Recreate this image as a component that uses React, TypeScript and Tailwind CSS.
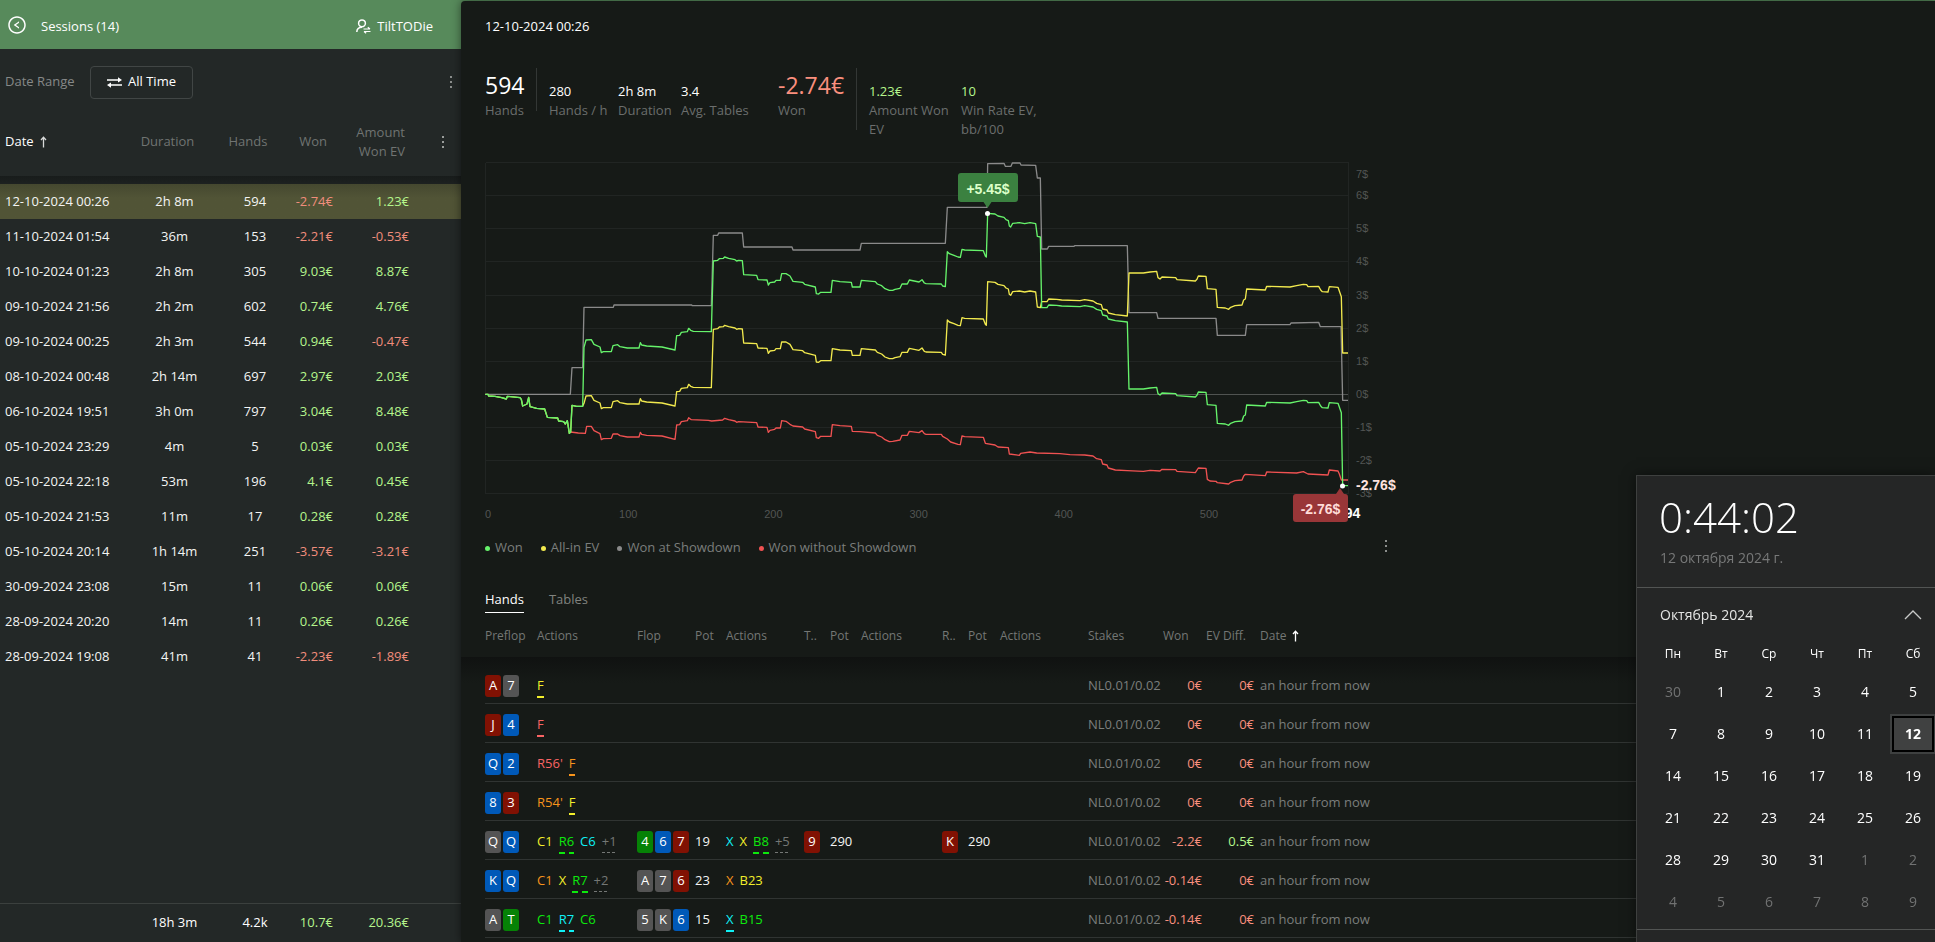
import { useState } from "react";
import type { ReactNode } from "react";
import { AiOutlineLeftCircle } from "react-icons/ai";

interface Session {
  date: string;
  duration: string;
  hands: string;
  won: string;
  ev: string;
}

const SESSIONS: Session[] = [
  { date: "12-10-2024 00:26", duration: "2h 8m", hands: "594", won: "-2.74€", ev: "1.23€" },
  { date: "11-10-2024 01:54", duration: "36m", hands: "153", won: "-2.21€", ev: "-0.53€" },
  { date: "10-10-2024 01:23", duration: "2h 8m", hands: "305", won: "9.03€", ev: "8.87€" },
  { date: "09-10-2024 21:56", duration: "2h 2m", hands: "602", won: "0.74€", ev: "4.76€" },
  { date: "09-10-2024 00:25", duration: "2h 3m", hands: "544", won: "0.94€", ev: "-0.47€" },
  { date: "08-10-2024 00:48", duration: "2h 14m", hands: "697", won: "2.97€", ev: "2.03€" },
  { date: "06-10-2024 19:51", duration: "3h 0m", hands: "797", won: "3.04€", ev: "8.48€" },
  { date: "05-10-2024 23:29", duration: "4m", hands: "5", won: "0.03€", ev: "0.03€" },
  { date: "05-10-2024 22:18", duration: "53m", hands: "196", won: "4.1€", ev: "0.45€" },
  { date: "05-10-2024 21:53", duration: "11m", hands: "17", won: "0.28€", ev: "0.28€" },
  { date: "05-10-2024 20:14", duration: "1h 14m", hands: "251", won: "-3.57€", ev: "-3.21€" },
  { date: "30-09-2024 23:08", duration: "15m", hands: "11", won: "0.06€", ev: "0.06€" },
  { date: "28-09-2024 20:20", duration: "14m", hands: "11", won: "0.26€", ev: "0.26€" },
  { date: "28-09-2024 19:08", duration: "41m", hands: "41", won: "-2.23€", ev: "-1.89€" },
];

const moneyColor = (v: string) => (v.startsWith("-") ? "text-[#f08d7c]" : "text-[#b5f58c]");

function ArrowUp({ className = "" }: { className?: string }) {
  return (
    <svg className={className} width="7" height="12" viewBox="0 0 7 12" fill="none" stroke="currentColor" strokeWidth="1.300">
      <path d="M3.500 11.500V1.500M1 4L3.500 1.300L6 4" />
    </svg>
  );
}

function MoreIcon() {
  return (
    <svg width="2" height="12" viewBox="0 0 2 12" fill="currentColor">
      <path d="M0 0h2v2H0zM0 5h2v2H0zM0 10h2v2H0z" />
    </svg>
  );
}

function SwapIcon() {
  return (
    <svg width="15" height="11" viewBox="0 0 15 11" fill="currentColor">
      <path d="M0 2.300h11V0.300L15 3l-4 2.600V3.700H0zM15 7.300H4V5.400L0 8l4 2.700V8.700h11z" />
    </svg>
  );
}

function UserSwitchIcon() {
  return (
    <svg width="15" height="15" viewBox="0 0 15 15" fill="none" stroke="currentColor" strokeWidth="1.500">
      <circle cx="6" cy="4.300" r="3.400" />
      <path d="M0.800 13C0.900 10 3 8.200 6 8.200" />
      <path d="M7.500 10h6.500M11.800 8.200L14 10M14.500 12.500H8M10.200 14.300L8 12.500" strokeWidth="1.200" />
    </svg>
  );
}

function SessionCols() {
  return (
    <colgroup>
      <col className="w-[132px]" />
      <col className="w-[85px]" />
      <col className="w-[76px]" />
      <col className="w-10" />
      <col className="w-[76px]" />
      <col />
    </colgroup>
  );
}

function Sidebar() {
  const [selected, setSelected] = useState(0);

  return (
    <aside className="flex w-[461px] shrink-0 flex-col bg-[#232827]">
      <header className="flex h-[49px] shrink-0 items-center bg-[#578a5b] pr-7 pl-[7px] text-[13px] font-medium text-white">
        <button aria-label="Back">
          <AiOutlineLeftCircle size={20} />
        </button>
        <h1 className="ml-3.5 pt-1">Sessions (14)</h1>
        <button className="ml-auto flex items-center gap-1.5 pt-1">
          <UserSwitchIcon />
          TiltTODie
        </button>
      </header>

      <div className="flex h-[66px] shrink-0 items-center pr-[9px] pl-[5px] text-[13px]">
        <span className="w-[85px] text-[#868988]">Date Range</span>
        <button className="flex h-[33px] w-[103px] items-center justify-center gap-1.5 rounded border border-[#414645] font-medium text-white">
          <SwapIcon />
          All Time
        </button>
        <button aria-label="Filter options" className="ml-auto text-[#8b8e8c]">
          <MoreIcon />
        </button>
      </div>

      <table className="w-full table-fixed border-collapse text-[13px] whitespace-nowrap">
        <SessionCols />
        <thead>
          <tr className="h-[61px] text-[#707472] [&>th]:pb-2 [&>th]:font-normal">
            <th className="pl-[5px] text-left text-white">
              <span className="flex items-center gap-1.5">
                <span className="font-medium">Date</span>
                <ArrowUp className="text-[#d8dad9]" />
              </span>
            </th>
            <th className="pr-3.5">Duration</th>
            <th className="pr-3.5">Hands</th>
            <th className="pr-1.5 text-right">Won</th>
            <th className="pr-1 text-right leading-[19px]">
              Amount
              <br />
              Won EV
            </th>
            <th>
              <button aria-label="Columns" className="ml-[33px] block text-[#9a9d9b]">
                <MoreIcon />
              </button>
            </th>
          </tr>
        </thead>
        <tbody className="text-center font-medium text-[#f4f5f4] [&_td]:pt-px">
          <tr aria-hidden="true">
            <td colSpan={6} className="h-2 bg-linear-to-b from-[#181c1b] to-[#1d2120]" />
          </tr>
          {SESSIONS.map((s, i) => (
            <tr
              key={s.date}
              onClick={() => setSelected(i)}
              className={`h-[35px] cursor-pointer ${selected === i ? "bg-linear-to-b from-[#45482f] to-[#515436] to-40%" : ""}`}
            >
              <td className="pl-[5px] text-left">{s.date}</td>
              <td>{s.duration}</td>
              <td>{s.hands}</td>
              <td className={`text-right ${moneyColor(s.won)}`}>{s.won}</td>
              <td className={`text-right ${moneyColor(s.ev)}`}>{s.ev}</td>
              <td />
            </tr>
          ))}
        </tbody>
      </table>

      <table className="mt-auto w-full table-fixed border-collapse text-[13px] font-medium whitespace-nowrap">
        <SessionCols />
        <tbody>
          <tr className="h-[39px] border-t border-[#3b403e] text-center text-white">
            <td />
            <td>18h 3m</td>
            <td>4.2k</td>
            <td className="text-right text-[#b5f58c]">10.7€</td>
            <td className="text-right text-[#b5f58c]">20.36€</td>
            <td />
          </tr>
        </tbody>
      </table>
    </aside>
  );
}

function Stat({ value, label, big, className = "" }: { value: string; label: string; big?: boolean; className?: string }) {
  return (
    <div className={`flex flex-col whitespace-pre-line ${big ? "pt-px" : "pt-[13px] font-medium"} ${className}`}>
      <span className={big ? "text-[23px] leading-8" : "text-[13px] leading-5"}>{value}</span>
      <span className="text-[13px] leading-[19px] font-normal text-[#6b6e6d]">{label}</span>
    </div>
  );
}

function Stats() {
  return (
    <section className="mt-8 flex items-start text-white">
      <Stat big value="594" label="Hands" className="w-[51px]" />
      <div className="h-[43px] w-px bg-[#333735]" />
      <Stat value="280" label="Hands / h" className="ml-3 w-[69px]" />
      <Stat value="2h 8m" label="Duration" className="w-[63px]" />
      <Stat value="3.4" label="Avg. Tables" className="w-[97px]" />
      <Stat big value="-2.74€" label="Won" className="w-[78px] text-[#fa8f7e]" />
      <div className="h-[62px] w-px bg-[#333735]" />
      <Stat value="1.23€" label={"Amount Won\nEV"} className="ml-3 w-[92px] text-[#b5f58c]" />
      <Stat value="10" label={"Win Rate EV,\nbb/100"} className="w-[92px] text-[#b5f58c]" />
    </section>
  );
}

type Point = [number, number];

const parse = (s: string): Point[] => s.split(" ").map((p) => p.split(",").map(Number) as Point);
const toPoints = (pts: Point[]) => pts.map((p) => p.join(",")).join(" ");

const SHOWDOWN = parse(
  "46,733 301,733 306,653 338,653 342,472 430,472 432,465 665,465 667,467 724,467 730,256 743,256 746,249 817,249 821,291 966,291 969,300 1170,300 1174,280 1426,280 1432,172 1551,172 1553,41 1602,40 1606,49 1623,49 1627,39 1650,39 1653,45 1697,46 1702,84 1711,84 1715,297 1732,297 1736,289 1812,289 1814,287 1972,287 1977,488 2060,488 2064,505 2238,505 2242,556 2326,556 2330,524 2460,524 2463,519 2546,517 2551,530 2613,530 2618,751 2634,751"
);

const WON = parse(
  "46,733 54,733 56,738 75,739 95,743 109,747 112,739 150,743 154,748 158,768 171,762 176,742 180,770 200,775 224,777 232,802 263,804 266,813 281,815 286,822 292,812 298,850 302,846 306,766 320,769 338,769 " +
    "342,592 348,570 364,569 372,583 390,591 394,608 400,605 424,605 429,587 443,584 450,590 472,594 507,594 511,578 515,585 530,588 576,591 615,600 620,557 629,556 634,547 652,545 656,535 662,541 670,544 724,545 " +
    "730,333 743,331 748,326 760,325 764,321 776,325 795,329 800,333 806,331 817,332 821,374 860,376 864,389 891,390 895,405 900,398 914,396 918,391 931,391 935,371 948,371 960,378 969,394 998,397 1004,403 1036,411 1039,431 1046,432 1052,427 1083,427 1087,391 1110,395 1144,397 1147,411 1170,411 1174,391 1216,395 1222,402 1235,407 1245,416 1258,421 1268,421 1275,418 1290,415 1296,402 1312,402 1318,390 1347,396 1356,389 1363,399 1368,401 1414,402 1418,408 1426,410 " +
    "1432,305 1438,311 1452,316 1464,321 1471,322 1476,298 1484,300 1540,302 1546,318 1549,321 1553,190 1575,192 1584,198 1602,202 1608,209 1615,212 1618,228 1622,231 1628,220 1648,218 1664,221 1680,218 1697,221 1702,259 1711,261 " +
    "1715,473 1731,473 1736,465 1760,466 1775,468 1830,470 1844,467 1869,471 1880,478 1894,482 1898,495 1911,498 1915,507 1936,512 1972,516 " +
    "1977,717 2020,717 2040,714 2060,712 2064,731 2070,735 2076,729 2117,731 2121,737 2176,741 2181,736 2185,726 2208,727 2212,764 2238,766 2242,820 2266,822 2276,826 2282,820 2295,815 2316,813 2321,798 2326,795 2330,765 2386,768 2390,757 2460,759 2480,755 2500,751 2510,752 2514,758 2546,757 2552,768 2557,773 2574,774 2578,758 2604,760 2614,788 2618,1007 2634,1007"
);

const NO_SHOWDOWN = parse(
  "302,846 325,849 346,850 350,829 364,829 372,842 390,851 394,869 400,866 424,865 429,852 443,852 450,857 472,861 507,861 511,847 515,853 530,856 576,858 615,868 620,825 629,824 634,815 652,812 656,803 664,809 715,811 725,813 758,810 764,805 776,809 795,813 800,817 806,815 860,818 864,831 891,832 895,847 900,841 914,838 918,834 931,834 935,812 948,814 960,823 969,828 998,831 1004,837 1036,845 1039,863 1046,865 1052,859 1083,859 1087,824 1110,827 1144,829 1147,844 1170,845 1216,849 1222,856 1235,861 1245,869 1258,875 1268,874 1290,870 1296,856 1312,856 1318,844 1347,848 1356,842 1363,851 1368,853 1414,853 1418,859 1432,867 1442,876 1464,883 1471,884 1476,858 1484,860 1540,862 1546,880 1575,885 1584,891 1615,893 1618,912 1648,916 1652,910 1680,906 1700,909 1770,911 1800,914 1844,915 1869,918 1880,926 1894,929 1898,942 1911,945 1915,954 1936,960 1972,962 2020,964 2040,961 2070,963 2076,958 2117,959 2121,964 2176,968 2185,954 2208,955 2212,988 2220,993 2238,994 2242,998 2276,1002 2282,997 2295,992 2316,990 2321,978 2326,973 2386,977 2390,966 2480,969 2500,965 2514,972 2574,975 2578,960 2604,963 2608,972 2614,990 2634,990"
);

// all-in luck per stretch: [last x, difference from the won line]
const EV_DIFF: Point[] = [
  [340, 0],
  [726, 168],
  [1700, 205],
  [1712, 212],
  [1974, -18],
  [2616, -348],
  [9999, -398],
];

const ALL_IN_EV = WON.map(([x, y]): Point => {
  const diff = EV_DIFF.find(([end]) => x <= end);
  return [x, y + (diff ? diff[1] : 0)];
});

const Y_TICKS = [6, 5, 4, 3, 2, 1, 0, -1, -2, -3];
const X_TICKS = [100, 200, 300, 400, 500];

function Chart() {
  return (
    <svg
      width="920"
      height="370"
      viewBox="0 0 920 370"
      className="mt-[21px] block shrink-0 overflow-visible"
      fontFamily="'Liberation Sans', Arial, sans-serif"
      role="img"
      aria-label="Winnings over hands played"
    >
      <g stroke="#212523" shapeRendering="crispEdges">
        <path d="M0.5 2.5H863.5V334M0.5 2.5V334" fill="none" />
        {Y_TICKS.map((t) => (
          <line key={t} x1="0" x2="863" y1={234.5 - t * 33.15} y2={234.5 - t * 33.15} stroke={t === 0 ? "#505351" : undefined} />
        ))}
      </g>
      <g fill="#525553" fontSize="11">
        <text x="871" y="18">7$</text>
        {Y_TICKS.map((t) => (
          <text key={t} x="871" y={238 - t * 33.15}>
            {t}$
          </text>
        ))}
        <text x="0" y="358">0</text>
        {X_TICKS.map((t) => (
          <text key={t} x={(t / 100) * 145.2 - 2} y="358" textAnchor="middle">
            {t}
          </text>
        ))}
      </g>

      <svg width="920" height="370" viewBox="45 30 2760 1110" fill="none" strokeWidth="4" strokeLinejoin="round">
        <polyline points={toPoints(NO_SHOWDOWN)} stroke="#f05252" />
        <polyline points={toPoints(SHOWDOWN)} stroke="#8a8a8a" />
        <polyline points={toPoints(ALL_IN_EV)} stroke="#f1e94e" />
        <polyline points={toPoints(WON)} stroke="#66f36b" />
      </svg>

      <g fontWeight="bold" fontSize="14">
        <text x="852" y="358" fill="#fff">594</text>
        <text x="871" y="330" fill="#ffe3df">-2.76$</text>
        <path d="M476 13h54a3 3 0 0 1 3 3v23a3 3 0 0 1-3 3h-23.500l-4 6-4-6H476a3 3 0 0 1-3-3V16a3 3 0 0 1 3-3z" fill="#3b8140" />
        <text x="503" y="34" fill="#dcffc8" textAnchor="middle">+5.45$</text>
        <path d="M811 334h40l4-6 4 6h1a3 3 0 0 1 3 3v22a3 3 0 0 1-3 3h-49a3 3 0 0 1-3-3v-22a3 3 0 0 1 3-3z" fill="#993638" />
        <text x="835.500" y="354" fill="#ffdcd8" textAnchor="middle">-2.76$</text>
      </g>
      <circle cx="502.500" cy="53.500" r="2.500" fill="#fff" />
      <circle cx="857.500" cy="326" r="2.500" fill="#fff" />
    </svg>
  );
}

function LegendItem({ dot, children }: { dot: string; children: ReactNode }) {
  return (
    <span className="flex items-center gap-[5px]">
      <i className={`size-[5px] rounded-full ${dot}`} />
      {children}
    </span>
  );
}

function Legend() {
  return (
    <div className="mt-2 flex h-5 w-[902px] items-center gap-[18px] text-[13px] font-medium text-[#7b7e7c]">
      <LegendItem dot="bg-[#66f36b]">Won</LegendItem>
      <LegendItem dot="bg-[#f1e94e]">All-in EV</LegendItem>
      <LegendItem dot="bg-[#8a8a8a]">Won at Showdown</LegendItem>
      <LegendItem dot="bg-[#f05252]">Won without Showdown</LegendItem>
      <button aria-label="Chart options" className="ml-auto pb-1 text-[#8b8e8c]">
        <MoreIcon />
      </button>
    </div>
  );
}

const SUITS = {
  h: "bg-[#811103]",
  s: "bg-[#545454]",
  d: "bg-[#0059b8]",
  c: "bg-[#068206]",
};

// "Ah 7s" -> two cards
function Cards({ cards }: { cards: string }) {
  return (
    <span className="flex gap-0.5">
      {cards.split(" ").map((c, i) => (
        <span
          key={i}
          className={`flex h-[22px] w-4 items-center justify-center rounded-[3px] text-[13px] font-medium text-white ${SUITS[c[1] as keyof typeof SUITS]}`}
        >
          {c[0]}
        </span>
      ))}
    </span>
  );
}

const SEATS = {
  y: "text-[#f2ee2b]",
  r: "text-[#f96464]",
  o: "text-[#f7941c]",
  g: "text-[#0de80d]",
  c: "text-[#0ff0f5]",
  m: "text-[#747775]",
};

// seat colour, text, and the underline drawn below the hero's action
type Action = [keyof typeof SEATS, string, ("one" | "two" | "more")?];

const UNDERLINES = {
  one: "-bottom-[3px] h-0.5 bg-current",
  two: "-bottom-[3px] h-0.5 bg-[linear-gradient(to_right,currentColor_6px,transparent_6px,transparent_10px,currentColor_10px)]",
  more: "-bottom-0.5 h-px bg-[repeating-linear-gradient(to_right,currentColor_0_3px,transparent_3px_5px)]",
};

function Actions({ list }: { list: Action[] }) {
  return (
    <span className="flex gap-1.5">
      {list.map(([seat, text, line], i) => (
        <span key={i} className={`relative ${SEATS[seat]}`}>
          {text}
          {line && <i className={`absolute inset-x-0 ${UNDERLINES[line]}`} />}
        </span>
      ))}
    </span>
  );
}

interface Hand {
  hole: string;
  preflop: Action[];
  flop?: string;
  flopPot?: string;
  flopActions?: Action[];
  turn?: string;
  turnPot?: string;
  river?: string;
  riverPot?: string;
  won: string;
  diff: string;
}

const HANDS: Hand[] = [
  { hole: "Ah 7s", preflop: [["y", "F", "one"]], won: "0€", diff: "0€" },
  { hole: "Jh 4d", preflop: [["r", "F", "one"]], won: "0€", diff: "0€" },
  { hole: "Qd 2d", preflop: [["r", "R56'"], ["o", "F", "one"]], won: "0€", diff: "0€" },
  { hole: "8d 3h", preflop: [["o", "R54'"], ["y", "F", "one"]], won: "0€", diff: "0€" },
  {
    hole: "Qs Qd",
    preflop: [["y", "C1"], ["g", "R6", "two"], ["c", "C6"], ["m", "+1", "more"]],
    flop: "4c 6d 7h",
    flopPot: "19",
    flopActions: [["c", "X"], ["y", "X"], ["g", "B8", "two"], ["m", "+5", "more"]],
    turn: "9h",
    turnPot: "290",
    river: "Kh",
    riverPot: "290",
    won: "-2.2€",
    diff: "0.5€",
  },
  {
    hole: "Kd Qd",
    preflop: [["o", "C1"], ["y", "X"], ["g", "R7", "two"], ["m", "+2", "more"]],
    flop: "As 7s 6h",
    flopPot: "23",
    flopActions: [["o", "X"], ["y", "B23"]],
    won: "-0.14€",
    diff: "0€",
  },
  {
    hole: "As Tc",
    preflop: [["g", "C1"], ["c", "R7", "two"], ["g", "C6"]],
    flop: "5s Ks 6d",
    flopPot: "15",
    flopActions: [["c", "X", "one"], ["g", "B15"]],
    won: "-0.14€",
    diff: "0€",
  },
];

function Th({ children, className = "" }: { children: ReactNode; className?: string }) {
  return <th className={`pt-0.5 text-left font-normal ${className}`}>{children}</th>;
}

function HandsTable() {
  return (
    <div className="-mx-6 bg-[linear-gradient(to_bottom,transparent_44px,#101211_44px,#161a17_70px)] pl-6">
      <table className="w-full table-fixed border-separate border-spacing-0 text-[13px] whitespace-nowrap">
        <colgroup>
          <col className="w-[52px]" />
          <col className="w-[100px]" />
          <col className="w-[58px]" />
          <col className="w-[31px]" />
          <col className="w-[78px]" />
          <col className="w-[26px]" />
          <col className="w-[31px]" />
          <col className="w-[81px]" />
          <col className="w-[26px]" />
          <col className="w-[32px]" />
          <col className="w-[88px]" />
          <col className="w-[72px]" />
          <col className="w-[42px]" />
          <col className="w-[52px]" />
          <col />
        </colgroup>
        <thead>
          <tr className="h-11 text-xs text-[#747775]">
            <Th>Preflop</Th>
            <Th>Actions</Th>
            <Th>Flop</Th>
            <Th>Pot</Th>
            <Th>Actions</Th>
            <Th>T..</Th>
            <Th>Pot</Th>
            <Th>Actions</Th>
            <Th>R..</Th>
            <Th>Pot</Th>
            <Th>Actions</Th>
            <Th>Stakes</Th>
            <Th className="pl-[3px]">Won</Th>
            <Th className="pl-1">EV Diff.</Th>
            <Th className="pl-1.5">
              <span className="flex items-center gap-1.5">
                Date
                <ArrowUp className="text-white" />
              </span>
            </Th>
          </tr>
        </thead>
        <tbody className="text-[#f4f5f4]">
          <tr aria-hidden="true">
            <td colSpan={15} className="h-2" />
          </tr>
          {HANDS.map((h) => (
            <tr key={h.hole} className="h-[39px] [&>td]:border-b [&>td]:border-[#303432] [&>td]:pt-[3px]">
              <td>
                <Cards cards={h.hole} />
              </td>
              <td>
                <Actions list={h.preflop} />
              </td>
              <td>{h.flop && <Cards cards={h.flop} />}</td>
              <td className="font-medium">{h.flopPot}</td>
              <td>{h.flopActions && <Actions list={h.flopActions} />}</td>
              <td>{h.turn && <Cards cards={h.turn} />}</td>
              <td className="font-medium">{h.turnPot}</td>
              <td />
              <td>{h.river && <Cards cards={h.river} />}</td>
              <td className="font-medium">{h.riverPot}</td>
              <td />
              <td className="text-[#7b7e7c]">NL0.01/0.02</td>
              <td className="text-right text-[#fa8f7e]">{h.won}</td>
              <td className={`text-right ${h.diff === "0€" ? "text-[#fa8f7e]" : "font-medium text-[#b5f58c]"}`}>{h.diff}</td>
              <td className="pl-1.5 text-[#7b7e7c]">an hour from now</td>
            </tr>
          ))}
        </tbody>
      </table>
    </div>
  );
}

const WEEKDAYS = ["Пн", "Вт", "Ср", "Чт", "Пт", "Сб"];
const WEEKS = [
  [30, 1, 2, 3, 4, 5],
  [7, 8, 9, 10, 11, 12],
  [14, 15, 16, 17, 18, 19],
  [21, 22, 23, 24, 25, 26],
  [28, 29, 30, 31, 1, 2],
  [4, 5, 6, 7, 8, 9],
];

const isOtherMonth = (week: number, day: number) => (week === 0 && day > 7) || (week > 3 && day < 15);

// System clock flyout, hangs over the bottom right corner and runs off its edge
function ClockFlyout() {
  return (
    <div className="fixed right-0 bottom-0 w-[299px] overflow-hidden border-t border-l border-[#3e403f] bg-[#252626] text-white shadow-[0_0_12px_rgba(0,0,0,0.5)]">
      <div className="h-[111px] pt-4 pl-[22px]">
        <div className="text-[42px] leading-[50px] font-light">0:44:02</div>
        <div className="mt-1.5 pl-px text-sm text-[#777878]">12 октября 2024 г.</div>
      </div>
      <div className="border-y border-[#525453]">
        <div className="flex h-[53px] items-center justify-between pr-[13px] pl-[23px]">
          <span className="text-sm text-[#e4e5e4]">Октябрь 2024</span>
          <button aria-label="Previous month">
            <svg width="18" height="10" viewBox="0 0 18 10" fill="none" stroke="#c8c9c8" strokeWidth="1.300">
              <path d="M1 9L9 1L17 9" />
            </svg>
          </button>
        </div>
        <div className="grid grid-cols-[repeat(6,48px)] pl-3">
          {WEEKDAYS.map((d) => (
            <span key={d} className="flex h-[30px] items-center justify-center pb-1 text-xs font-medium">
              {d}
            </span>
          ))}
          {WEEKS.map((week, w) =>
            week.map((day) => (
              <div key={`${w}-${day}`} className="flex h-[42px] items-center justify-center">
                {w === 1 && day === 12 ? (
                  <button className="h-10 w-[46px] border-2 border-[#3e4040] bg-black p-0.5 text-sm font-bold">
                    <span className="flex h-full items-center justify-center bg-[#404141]">{day}</span>
                  </button>
                ) : (
                  <button className={`h-10 w-[46px] text-sm ${isOtherMonth(w, day) ? "text-[#717272]" : ""}`}>{day}</button>
                )}
              </div>
            ))
          )}
        </div>
        <div className="h-[6px]" />
      </div>
      <div className="h-3" />
    </div>
  );
}

export default function App() {
  const [tab, setTab] = useState("Hands");

  return (
    <div className="flex h-screen overflow-hidden bg-[#578a5b] font-['Open_Sans','Noto_Sans',sans-serif]">
      <Sidebar />
      <main className="mt-px flex min-w-0 flex-1 flex-col overflow-hidden rounded-tl bg-[#161a17] px-6 pt-[15px] shadow-[0_0_10px_rgba(0,0,0,0.5)]">
        <h2 className="text-[13px] leading-5 font-medium text-white">12-10-2024 00:26</h2>
        <Stats />
        <Chart />
        <Legend />
        <div className="mt-[31px] flex gap-[25px] text-[13px] leading-5 font-medium">
          {["Hands", "Tables"].map((t) => (
            <button
              key={t}
              onClick={() => setTab(t)}
              className={`border-b pb-[3px] ${tab === t ? "border-white text-white" : "border-transparent text-[#80837f]"}`}
            >
              {t}
            </button>
          ))}
        </div>
        <HandsTable />
      </main>
      <ClockFlyout />
    </div>
  );
}
